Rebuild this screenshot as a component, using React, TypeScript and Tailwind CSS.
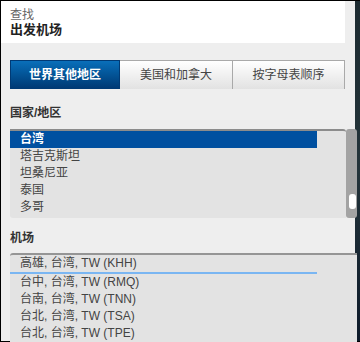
import React from "react";

const countries = ["台湾", "塔吉克斯坦", "坦桑尼亚", "泰国", "多哥"];
const airports = [
	"高雄, 台湾, TW (KHH)",
	"台中, 台湾, TW (RMQ)",
	"台南, 台湾, TW (TNN)",
	"台北, 台湾, TW (TSA)",
	"台北, 台湾, TW (TPE)",
];

const font = { fontFamily: '"Liberation Sans", "Noto Sans CJK SC", sans-serif' };

export default function App() {
	return (
		<div
			className="w-[360px] h-[342px] bg-black pt-px pl-px pb-px flex overflow-hidden"
			style={font}
		>
			{/* main panel */}
			<div className="w-[354px] h-full bg-[#eeeeee] flex flex-col overflow-visible relative z-10">
				{/* Header */}
				<div className="w-[344px] h-[42px] shrink-0 bg-white pl-[9px] pt-[7px]">
					<div className="text-[12px] leading-[14px] text-[#666]">查找</div>
					<div className="text-[13px] leading-[15px] font-bold text-[#222]">出发机场</div>
				</div>

				{/* Tabs */}
				<div className="ml-[9px] mt-[17px] w-[335px] h-[29px] flex shrink-0">
					<div className="w-[110px] h-full flex items-center justify-center bg-gradient-to-b from-[#0a6fba] to-[#003a75] border border-[#003a75] text-white text-[12px] font-bold">
						世界其他地区
					</div>
					<div className="w-[113px] h-full flex items-center justify-center bg-gradient-to-b from-white to-[#e2e2e2] border-t border-r border-[#a9a9a9] text-[#444] text-[12px]">
						美国和加拿大
					</div>
					<div className="flex-1 h-full flex items-center justify-center bg-gradient-to-b from-white to-[#e2e2e2] border-t border-r border-[#a9a9a9] text-[#444] text-[12px]">
						按字母表顺序
					</div>
				</div>

				{/* Country */}
				<div className="ml-[9px] mt-[16px] h-[17px] text-[12px] leading-[17px] font-bold text-[#333] shrink-0">
					国家/地区
				</div>
				<div className="ml-[9px] mt-[7px] w-[347px] h-[89px] flex shrink-0">
					<div className="w-[336px] h-full bg-[#e3e3e3] border-t-2 border-[#8c8c8c] rounded-bl-[3px] rounded-tr-[3px] pt-0">
						{countries.map((c, i) => (
							<div
								key={c}
								className={
									i === 0
										? "w-[307px] h-[17px] leading-[17px] pl-[10px] text-[12px] font-bold text-white bg-[#0050a0]"
										: "w-[307px] h-[17px] leading-[17px] pl-[10px] text-[12px] text-[#444]"
								}
							>
								{c}
							</div>
						))}
					</div>
					<div className="w-[11px] h-full bg-[#a3a3a3] rounded-[3px] flex flex-col items-end pt-[65px] pr-px">
						<div className="w-[7px] h-[15px] bg-white rounded-[3px]" />
					</div>
				</div>

				{/* Airports */}
				<div className="ml-[9px] mt-[12px] h-[17px] text-[12px] leading-[17px] font-bold text-[#333] shrink-0">
					机场
				</div>
				<div className="ml-[9px] mt-[6px] w-[347px] flex-1 bg-[#e3e3e3] border-t-2 border-[#959595] rounded-tl-[3px]">
					{airports.map((a, i) => (
						<div
							key={a}
							className={
								i === 0
									? "w-[307px] h-[19px] leading-[17px] pl-[10px] text-[12px] text-[#444] border-b-2 border-[#7ab6f2]"
									: "w-[307px] h-[17px] leading-[17px] pl-[10px] text-[12px] text-[#444]"
							}
						>
							{a}
						</div>
					))}
				</div>
			</div>

			{/* dark background strip */}
			<div className="flex-1 h-full bg-gradient-to-b from-[#1c2a30] via-[#24343a] to-[#0d1a2a]" />
		</div>
	);
}
